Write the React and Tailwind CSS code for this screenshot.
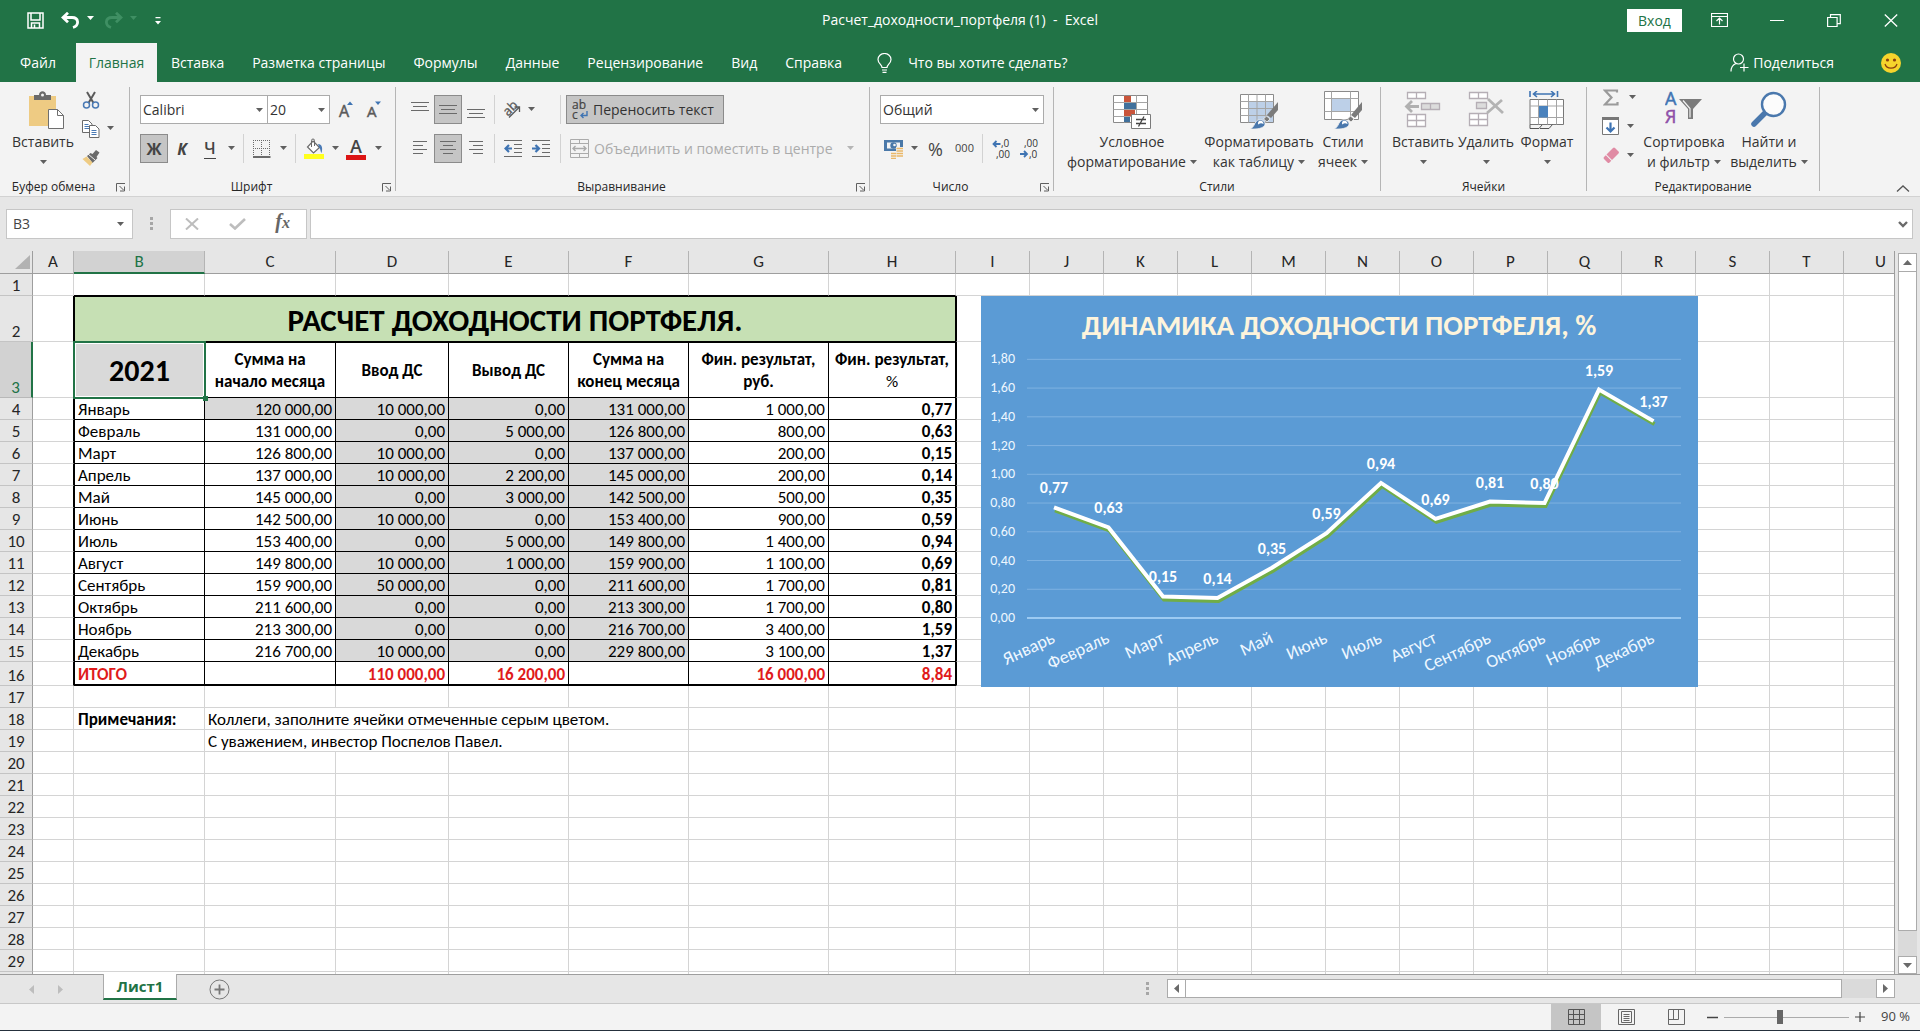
import React from "react";

const UI = "font-['Open_Sans','Noto_Sans',sans-serif]";
const SHEET = "font-['Carlito','Lato','Noto_Sans',sans-serif]";

/* ---------- small shared pieces ---------- */

function Caret({ className = "text-[#5f5f5f]" }) {
  return (
    <svg width="7" height="4" viewBox="0 0 7 4" className={"shrink-0 " + className} aria-hidden="true">
      <path d="M0 0h7L3.5 4z" fill="currentColor" />
    </svg>
  );
}

function Drop({ label, className = "w-3.5", tone }) {
  return (
    <button type="button" aria-label={label} className={"flex h-7 items-center justify-center " + className}>
      <Caret className={tone} />
    </button>
  );
}

function Tool({ label, className = "w-7", pressed = false, children }) {
  return (
    <button
      type="button"
      aria-label={label}
      aria-pressed={pressed}
      className={
        "flex h-[29px] shrink-0 items-center justify-center " +
        (pressed ? "border border-[#8b8b8b] bg-[#c5c5c5] " : "") +
        className
      }
    >
      {children}
    </button>
  );
}

function Divider({ className = "mx-1" }) {
  return <span className={"h-[29px] w-px shrink-0 bg-[#d2d2d2] " + className} />;
}

function Picker({ label, value, className }) {
  return (
    <div className={"relative flex h-[29px] items-center border border-[#ababab] bg-white " + className}>
      <select
        aria-label={label}
        className="h-full w-full appearance-none bg-transparent pl-0.5 text-sm text-[#333] outline-none"
        defaultValue={value}
      >
        <option>{value}</option>
      </select>
      <span className="pointer-events-none absolute right-1">
        <Caret />
      </span>
    </div>
  );
}

function Group({ title, launcher = false, className, children }) {
  return (
    <section aria-label={title} className={"flex shrink-0 " + className}>
      <div className="flex min-w-0 flex-1 flex-col">
        <div className="h-24">{children}</div>
        <div className="flex h-[18px] items-center">
          <h2 className="flex-1 text-center text-xs text-[#262626]">{title}</h2>
          {launcher && (
            <button type="button" aria-label={title + ": параметры"} className="flex h-4 w-[22px] items-center justify-end pr-[3px]">
              <svg width="10" height="9" viewBox="0 0 10 9" fill="none" stroke="#5f5f5f" aria-hidden="true">
                <path d="M.5 8.500V.5h8.500M3.500 3l4 4M8.500 3.500V8H4" />
              </svg>
            </button>
          )}
        </div>
      </div>
      <span className="mt-[5px] h-[104px] w-px bg-[#b5b5b5]" />
    </section>
  );
}

function TallButton({ icon, lines, className }) {
  const single = lines.length === 1;
  return (
    <button type="button" className={"flex shrink-0 flex-col items-center pt-[9px] text-sm leading-5 whitespace-nowrap text-[#333] " + className}>
      <span className="mb-px h-10">{icon}</span>
      <span>{lines[0]}</span>
      <span className="flex h-5 items-center gap-1">
        {!single && lines[1]}
        <Caret />
      </span>
    </button>
  );
}

/* ---------- ribbon drawings ---------- */

const PasteIcon = (
  <svg width="44" height="40" viewBox="0 0 44 40" aria-hidden="true">
    <rect x="8" y="5" width="27" height="30" fill="#eecb83" />
    <path d="M13 4h5c0-5 7-5 7 0h5v5H13z" fill="#6a6a6a" />
    <circle cx="21.500" cy="4" r="1.500" fill="#f3f3f3" />
    <path d="M27.500 18.500h9l6 6v13h-15z" fill="#fff" stroke="#6f6f6f" />
    <path d="M36.500 18.500v6h6" fill="none" stroke="#6f6f6f" />
  </svg>
);

const CutIcon = (
  <svg width="18" height="18" viewBox="0 0 18 18" fill="none" aria-hidden="true">
    <path d="M5 1l6.500 11M13 1L6.500 12" stroke="#5a5a5a" strokeWidth="2" />
    <circle cx="4.500" cy="14" r="3" stroke="#4a7ab5" strokeWidth="1.500" />
    <circle cx="13.500" cy="14" r="3" stroke="#4a7ab5" strokeWidth="1.500" />
  </svg>
);

const CopyIcon = (
  <svg width="18" height="18" viewBox="0 0 18 18" fill="#fff" stroke="#6a6a6a" aria-hidden="true">
    <path d="M.5.5h6l3.500 3.500v8.500H.5z" />
    <path d="M2.500 4.500h4M2.500 6.500h5M2.500 8.500h5" stroke="#4a7ab5" />
    <path d="M7.500 5.500h6l3.500 3.500v8.500H7.500z" />
    <path d="M9.500 10.500h5M9.500 12.500h5M9.500 14.500h5" stroke="#4a7ab5" />
  </svg>
);

const PainterIcon = (
  <svg width="19" height="16" viewBox="0 0 19 16" aria-hidden="true">
    <path d="M14 0l3.500 2.500-3 4.500 1 1-5 5L5 6l3.500-3 2 1z" fill="#6a6a6a" />
    <path d="M6 4l7 6" stroke="#f3f3f3" />
    <path d="M4.500 6.500l6 6-2.500 3.500L.5 9z" fill="#eecb83" />
  </svg>
);

function Lines({ rows, width = 18 }) {
  return (
    <svg width={width} height="17" viewBox={"0 0 " + width + " 17"} stroke="#6a6a6a" aria-hidden="true">
      {rows.map(([x, y, w]) => (
        <path key={y} d={"M" + x + " " + y + ".5h" + w} />
      ))}
    </svg>
  );
}

const BordersIcon = (
  <svg width="18" height="18" viewBox="0 0 18 18" fill="none" stroke="#6a6a6a" aria-hidden="true">
    <path d="M.5 0v17M16.500 0v17M8.500 0v17M0 .5h17M0 8.500h17" strokeDasharray="1 1" />
    <path d="M0 17h17.500" strokeWidth="2" />
  </svg>
);

const FillIcon = (
  <svg width="20" height="21" viewBox="0 0 20 21" aria-hidden="true">
    <path d="M9 3l6.500 6.500-6 5.500-6-6z" fill="#fff" stroke="#6a6a6a" strokeWidth="1.200" />
    <path d="M7.500 9V2.500a1.500 1.500 0 0 1 3 0V8" fill="none" stroke="#6a6a6a" />
    <path d="M14 6c4 0 5 4 3.500 9-1-1-1-4-2-5z" fill="#4a7ab5" />
    <rect x="0" y="16" width="20" height="5" fill="#ffff1e" />
  </svg>
);

const OrientIcon = (
  <svg width="22" height="20" viewBox="0 0 22 20" aria-hidden="true">
    <text x="3" y="15" fontSize="13" fill="#5a5a5a" stroke="#5a5a5a" strokeWidth=".3" transform="rotate(-45 7 11)">ab</text>
    <path d="M8 17.500L18 7.500M13.500 7h5v5" fill="none" stroke="#5a5a5a" strokeWidth="1.300" />
  </svg>
);

function IndentIcon({ flip = false }) {
  return (
    <svg width="19" height="17" viewBox="0 0 19 17" fill="none" aria-hidden="true">
      <path d="M0 .5h18M10 4.500h8M10 8.500h8M10 12.500h8M0 16.500h18" stroke="#6a6a6a" />
      <path d={flip ? "M0 8.500h7M3.500 5l3.500 3.500L3.500 12" : "M8 8.500H1.500M5 5L1.500 8.500 5 12"} stroke="#3f74b3" strokeWidth="2.200" />
    </svg>
  );
}

const WrapIcon = (
  <svg width="17" height="22" viewBox="0 0 17 22" aria-hidden="true">
    <text x="0" y="10" fontSize="12" fill="#444" stroke="#444" strokeWidth=".2">ab</text>
    <text x="0" y="20" fontSize="12" fill="#444" stroke="#444" strokeWidth=".2">c</text>
    <path d="M15 12v4.500H9M11.500 14L9 16.500l2.500 2.500" fill="none" stroke="#3f74b3" strokeWidth="1.400" />
  </svg>
);

const MergeIcon = (
  <svg width="19" height="19" viewBox="0 0 19 19" fill="none" stroke="#ababab" aria-hidden="true">
    <path d="M.5.5h18v18H.5zM.5 4.500h18M.5 14.500h18M9.500.5v4M9.500 14.500v4" />
    <path d="M3 9.500h13M5.500 7L3 9.500 5.500 12M13.500 7L16 9.500 13.500 12" strokeWidth="1.400" />
  </svg>
);

const MoneyIcon = (
  <svg width="20" height="20" viewBox="0 0 20 20" aria-hidden="true">
    <rect x="0" y="1" width="19" height="11" fill="#4a78a8" />
    <path d="M3 3.500h13v6H3z" fill="#f3f3f3" />
    <circle cx="9.500" cy="6.500" r="3.200" fill="#4a78a8" />
    <circle cx="10.500" cy="6" r="1.300" fill="#f3f3f3" />
    <path d="M12 8h7v11h-7z" fill="#f3f3f3" />
    <path d="M12.500 9.500H19M12.500 12H19M12.500 14.500H19M7 14.500h5M7 17h5M12.500 17H19M7 19.500h5" stroke="#eab868" strokeWidth="1.700" />
  </svg>
);

function DecimalIcon({ more = false }) {
  return (
    <svg width="19" height="22" viewBox="0 0 19 22" aria-hidden="true">
      <text x={more ? 9 : 4} y="9" fontSize="10" fill="#333">{more ? ",0" : ",00"}</text>
      <text x={more ? 4 : 9} y="20" fontSize="10" fill="#333">{more ? ",00" : ",0"}</text>
      <path
        d={more ? "M8.500 6H1.500M4.500 3l-3 3 3 3" : "M0 16h7M4 13l3 3-3 3"}
        fill="none"
        stroke="#3f74b3"
        strokeWidth="1.800"
      />
    </svg>
  );
}

const ConditionalIcon = (
  <svg width="38" height="40" viewBox="0 0 38 40" aria-hidden="true">
    <path d="M.5 4.500h34v27H.5z" fill="#fff" stroke="#8a8a8a" />
    <path d="M11.500 4.500v27M23.500 4.500v27M.5 11.500h34M.5 18.500h34M.5 25.500h34" stroke="#a5a5a5" fill="none" />
    <path d="M11 5h7v6h-7zM11 19h11v6H11z" fill="#c9553b" />
    <path d="M11 12h12v6H11zM11 26h6v5h-6z" fill="#41719c" />
    <path d="M18.500 23.500h19v14h-19z" fill="#fff" stroke="#7a7a7a" />
    <path d="M23 28.500h10M23 32.500h10M31 25.500l-5.500 10" stroke="#444" strokeWidth="1.300" />
  </svg>
);

const brush = (
  <g>
    <path d="M38 11v8l-7 8-4-3z" fill="#7b7b7b" />
    <path d="M26.500 25l3.500 3-3 3-3.500-3z" fill="#7b7b7b" stroke="#f3f3f3" strokeWidth=".8" />
    <path d="M10 38c4-1.500 4-5 6.500-8 3-2.500 7.500-1 8.500 2 .5 4-4 6.500-15 6z" fill="#4a78ad" stroke="#f3f3f3" strokeWidth=".8" />
    <path d="M19 30c3-1 4.500 1 4.500 3-2-1-3.500-1-5 .5-1-1-.5-2.500.5-3.500z" fill="#fff" />
  </g>
);

const FormatTableIcon = (
  <svg width="38" height="40" viewBox="0 0 38 40" aria-hidden="true">
    <path d="M.5 3.500h33v28H.5z" fill="#fff" stroke="#8a8a8a" />
    <path d="M9 11h24v20H9z" fill="#bdd0e8" />
    <path d="M8.500 3.500v28M17 3.500v28M25.500 3.500v28M.5 10.500h33M.5 17.500h33M.5 24.500h33" stroke="#a5a5a5" fill="none" />
    {brush}
  </svg>
);

const CellStylesIcon = (
  <svg width="39" height="40" viewBox="0 0 39 40" aria-hidden="true">
    <path d="M.5.5h34v28H.5z" fill="#fff" stroke="#8a8a8a" />
    <path d="M7.500.5v28M26.500.5v28M.5 7.500h34M.5 20.500h34" stroke="#a5a5a5" fill="none" />
    <path d="M8 8h18v12H8z" fill="#bdd0e8" />
    {brush}
  </svg>
);

const InsertCellsIcon = (
  <svg width="38" height="40" viewBox="0 0 38 40" fill="none" stroke="#b5aeb5" aria-hidden="true">
    <path d="M3.500 1.500h18v6h-18zM12.500 1.500v6M3.500 23.500h18v12h-18zM12.500 23.500v12M3.500 29.500h18" fill="#fff" strokeWidth="1.300" />
    <path d="M17.500 12.500h18v6h-18zM26.500 12.500v6" fill="#dcdcdc" strokeWidth="1.300" />
    <path d="M15 15.500H3M8 10l-5.500 5.500L8 21" stroke="#b0b0b0" strokeWidth="2.800" />
  </svg>
);

const DeleteCellsIcon = (
  <svg width="38" height="40" viewBox="0 0 38 40" fill="none" stroke="#b5aeb5" aria-hidden="true">
    <path d="M2.500 1.500h18v6h-18zM11.500 1.500v6M2.500 22.500h18v12h-18zM11.500 22.500v12M2.500 28.500h18" fill="#fff" strokeWidth="1.300" />
    <path d="M9.500 11.500h10v6h-10z" fill="#dcdcdc" strokeWidth="1.300" />
    <path d="M21 8l15 14M35 9L20 22" stroke="#b3b3b3" strokeWidth="2.800" />
  </svg>
);

const FormatCellsIcon = (
  <svg width="36" height="40" viewBox="0 0 36 40" fill="none" aria-hidden="true">
    <path d="M1 0v6M28.500 0v6M4 3h22M8 0L4.500 3 8 6M22 0l3.500 3L22 6" stroke="#3f74b3" strokeWidth="1.600" />
    <path d="M1 8.500h33.500v25H1z" fill="#fff" stroke="#777" />
    <path d="M9.500 8.500v25M18.500 8.500v25M27.500 8.500v25M1 15h33.500M1 26.500h33.500" stroke="#a5a5a5" />
    <path d="M10 15h9v11.500h-9z" fill="#4a82bd" />
    <path d="M1 33.500v4h9l3-3.500M11 37.500h9l3.500-4" stroke="#555" />
  </svg>
);

const SumIcon = (
  <svg width="16" height="17" viewBox="0 0 16 17" fill="none" aria-hidden="true">
    <path d="M14 3.500V1.500H2l6.500 7L2 15.500h12.500v-2.500" stroke="#9a9a9a" strokeWidth="2.200" />
  </svg>
);

const FillDownIcon = (
  <svg width="18" height="19" viewBox="0 0 18 19" fill="none" aria-hidden="true">
    <path d="M.5 1.500h16v16H.5z" fill="#fff" stroke="#777" />
    <path d="M0 1.500h17" stroke="#777" strokeWidth="3" />
    <path d="M8.500 5.500v9M4.500 10.500l4 4 4-4" stroke="#3f74b3" strokeWidth="2.200" />
  </svg>
);

const EraserIcon = (
  <svg width="18" height="17" viewBox="0 0 18 17" aria-hidden="true">
    <path d="M11 1q1-1 2 0l3.500 3.500q1 1 0 2L10 13 4.500 7.500z" fill="#e08ba4" />
    <path d="M3.800 8.200l5.500 5.500-1.800 1.800q-1 1-2 0l-3.500-3.500q-1-1 0-2z" fill="#e08ba4" />
  </svg>
);

const SortIcon = (
  <svg width="38" height="40" viewBox="0 0 38 40" aria-hidden="true">
    <text x="0" y="14" fontSize="18" fill="#3f74b3" stroke="#3f74b3" strokeWidth=".5">А</text>
    <text x="0" y="32" fontSize="18" fill="#8e4fa8" stroke="#8e4fa8" strokeWidth=".5">Я</text>
    <path d="M14 8h23L28 18v10h-5V18z" fill="#7b7b7b" />
    <path d="M18 9.500l7 8v9" fill="none" stroke="#f3f3f3" strokeWidth="1.200" />
  </svg>
);

const FindIcon = (
  <svg width="38" height="40" viewBox="0 0 38 40" fill="none" aria-hidden="true">
    <path d="M4 33l11-11" stroke="#4a78ad" strokeWidth="5.500" strokeLinecap="round" />
    <circle cx="23.500" cy="13.500" r="11.500" fill="#fcfcfc" stroke="#4a78ad" strokeWidth="2.400" />
  </svg>
);

/* ---------- title bar and tabs ---------- */

function TitleBar() {
  return (
    <header className="grid h-[43px] shrink-0 grid-cols-[1fr_auto_1fr] items-start bg-[#217346] text-sm text-white">
      <div className="flex h-10 items-center pl-[27px]">
        <button type="button" aria-label="Сохранить">
          <svg width="17" height="17" viewBox="0 0 17 17" fill="none" stroke="#fff" aria-hidden="true">
            <path d="M1 1h15v15H1zM4 1v7h9V1" strokeWidth="1.500" />
            <path d="M4.500 16v-5h8v5M7.500 12.500V16" strokeWidth="1.500" />
          </svg>
        </button>
        <button type="button" aria-label="Отменить" className="ml-[17px]">
          <svg width="19" height="17" viewBox="0 0 19 17" fill="none" stroke="#fff" strokeWidth="2.800" aria-hidden="true">
            <path d="M7 .8L2 5.500l5 4.700M2 5.500h9c7 0 7.500 8 1 10" />
          </svg>
        </button>
        <Drop label="Список отмен" tone="text-white" className="ml-0.5 w-4 pb-1" />
        <button type="button" aria-label="Повторить" className="ml-1.5" disabled>
          <svg width="19" height="17" viewBox="0 0 19 17" fill="none" stroke="#3f8f63" strokeWidth="2.800" aria-hidden="true">
            <path d="M12 .8l5 4.700-5 4.700M17 5.500H8c-7 0-7.500 8-1 10" />
          </svg>
        </button>
        <Drop label="Список повторов" tone="text-[#3f8f63]" className="ml-0.5 w-4 pb-1" />
        <button type="button" aria-label="Настройка панели быстрого доступа" className="mt-0.5 ml-3.5">
          <svg width="6" height="8" viewBox="0 0 6 8" aria-hidden="true">
            <path d="M.5 0h5v1.300h-5zM0 4h6L3 7.500z" fill="#fff" />
          </svg>
        </button>
      </div>
      <h1 className="h-10 leading-10 whitespace-pre">Расчет_доходности_портфеля (1)  -  Excel</h1>
      <div className="flex h-10 items-center justify-end pr-[22px]">
        <button type="button" className="h-[23px] w-[55px] bg-white leading-[23px] text-[#217346]">Вход</button>
        <button type="button" aria-label="Параметры отображения ленты" className="ml-[29px]">
          <svg width="17" height="14" viewBox="0 0 17 14" fill="none" stroke="#fff" aria-hidden="true">
            <path d="M.5.5h16v13H.5zM.5 3.500h16M8.500 11.500v-6M5.500 8l3-3 3 3" strokeWidth="1.200" />
          </svg>
        </button>
        <button type="button" aria-label="Свернуть" className="ml-[42px]">
          <svg width="14" height="14" viewBox="0 0 14 14" stroke="#fff" aria-hidden="true">
            <path d="M0 7.500h14" />
          </svg>
        </button>
        <button type="button" aria-label="Восстановить" className="ml-[43px]">
          <svg width="14" height="13" viewBox="0 0 14 13" fill="none" stroke="#fff" strokeWidth="1.200" aria-hidden="true">
            <path d="M.6 3.500h9.500v9H.6zM3.500 3V.6h9.800v9h-3" />
          </svg>
        </button>
        <button type="button" aria-label="Закрыть" className="ml-[43px]">
          <svg width="14" height="13" viewBox="0 0 14 13" stroke="#fff" strokeWidth="1.300" aria-hidden="true">
            <path d="M.8.5l12.400 12M13.200.5L.8 12.500" />
          </svg>
        </button>
      </div>
    </header>
  );
}

const TABS = ["Вставка", "Разметка страницы", "Формулы", "Данные", "Рецензирование", "Вид", "Справка"];

function TabBar() {
  return (
    <nav aria-label="Вкладки ленты" className="flex h-[39px] shrink-0 items-stretch bg-[#217346] text-sm whitespace-nowrap text-white">
      <button type="button" className="w-[76px]">Файл</button>
      <button type="button" className="w-[81px] bg-[#f3f3f3] text-[#217346]">Главная</button>
      {TABS.map((t) => (
        <button key={t} type="button" className="px-3.5">{t}</button>
      ))}
      <button type="button" className="ml-[21px] flex items-center gap-4">
        <svg width="15" height="20" viewBox="0 0 15 20" fill="none" stroke="#fff" strokeWidth="1.200" aria-hidden="true">
          <path d="M5 14.500c0-3-4-4-4-8a6.500 6 0 0 1 13 0c0 4-4 5-4 8zM5 17h5M5.500 19.300h4" />
        </svg>
        Что вы хотите сделать?
      </button>
      <button type="button" className="ml-auto flex items-center gap-1">
        <svg width="19" height="19" viewBox="0 0 19 19" fill="none" stroke="#fff" strokeWidth="1.200" aria-hidden="true">
          <circle cx="8.500" cy="6" r="5" />
          <path d="M1 18.500c0-4.500 2.500-7 5-8M14 10.500v8M10 14.500h8.500" />
        </svg>
        Поделиться
      </button>
      <button type="button" aria-label="Отправить отзыв" className="mr-[19px] ml-[47px]">
        <svg width="20" height="20" viewBox="0 0 20 20" aria-hidden="true">
          <circle cx="10" cy="10" r="10" fill="#f6d42c" />
          <circle cx="6.500" cy="7" r="1.600" fill="#8a3f10" />
          <circle cx="13.500" cy="7" r="1.600" fill="#8a3f10" />
          <path d="M4 11c1.500 5.500 10.500 5.500 12 0" fill="none" stroke="#8a3f10" strokeWidth="1.200" />
        </svg>
      </button>
    </nav>
  );
}

/* ---------- ribbon ---------- */

function FontSizeButton({ label, up }) {
  return (
    <Tool label={label}>
      <svg width="16" height="18" viewBox="0 0 16 18" aria-hidden="true">
        <text x="1" y="16" fontSize={up ? 16 : 15} fill="#5a5a5a" stroke="#5a5a5a" strokeWidth=".5">A</text>
        <path d={up ? "M9 4h6l-3-3.500z" : "M9 .5h6l-3 3.500z"} fill="#3f74b3" />
      </svg>
    </Tool>
  );
}

function Ribbon() {
  return (
    <div className="flex h-[115px] shrink-0 overflow-hidden border-b border-[#d2d2d2] bg-[#f3f3f3]">
      <Group title="Буфер обмена" launcher className="w-[130px]">
        <div className="flex">
          <TallButton icon={PasteIcon} lines={["Вставить"]} className="ml-[5px] w-[76px]" />
          <div className="flex flex-col pt-[3px]">
            <Tool label="Вырезать" className="w-5">{CutIcon}</Tool>
            <div className="flex">
              <Tool label="Копировать" className="w-5">{CopyIcon}</Tool>
              <Drop label="Варианты копирования" className="ml-0.5 w-3.5" />
            </div>
            <Tool label="Формат по образцу" className="w-5">{PainterIcon}</Tool>
          </div>
        </div>
      </Group>

      <Group title="Шрифт" launcher className="w-[266px]">
        <div className="flex flex-col gap-2.5 pt-[13px] pl-2.5">
          <div className="flex">
            <Picker label="Шрифт" value="Calibri" className="w-32" />
            <Picker label="Размер шрифта" value="20" className="-ml-px w-[63px]" />
            <span className="ml-0.5 flex">
              <FontSizeButton label="Увеличить размер шрифта" up />
              <FontSizeButton label="Уменьшить размер шрифта" />
            </span>
          </div>
          <div className="flex text-base text-[#444]">
            <Tool label="Полужирный" pressed><b>Ж</b></Tool>
            <Tool label="Курсив"><b className="italic">К</b></Tool>
            <Tool label="Подчеркнутый"><span className="border-b border-[#444] leading-5 font-semibold">Ч</span></Tool>
            <Drop label="Виды подчеркивания" />
            <Divider className="mx-[5px]" />
            <Tool label="Границы" className="w-[26px]">{BordersIcon}</Tool>
            <Drop label="Виды границ" className="w-4" />
            <Divider />
            <Tool label="Цвет заливки">{FillIcon}</Tool>
            <Drop label="Выбор цвета заливки" />
            <Tool label="Цвет шрифта">
              <span className="flex w-5 flex-col items-center border-b-[5px] border-[#dc1414] text-lg leading-[17px] font-semibold">A</span>
            </Tool>
            <Drop label="Выбор цвета шрифта" className="w-4" />
          </div>
        </div>
      </Group>

      <Group title="Выравнивание" launcher className="w-[474px]">
        <div className="flex flex-col gap-2.5 pt-[13px] pl-2.5">
          <div className="flex">
            <Tool label="По верхнему краю"><Lines rows={[[0, 1, 18], [2, 5, 14], [0, 9, 18]]} /></Tool>
            <Tool label="По середине" pressed><Lines rows={[[0, 4, 18], [2, 8, 14], [0, 12, 18]]} /></Tool>
            <Tool label="По нижнему краю"><Lines rows={[[0, 8, 18], [2, 12, 14], [0, 16, 18]]} /></Tool>
            <Divider />
            <Tool label="Ориентация" className="w-[26px]">{OrientIcon}</Tool>
            <Drop label="Варианты ориентации" className="mr-[18px] w-3" />
            <Divider className="mr-[5px] ml-[5px]" />
            <button type="button" aria-pressed="true" className="flex h-[29px] items-center gap-1 border border-[#8b8b8b] bg-[#c5c5c5] px-[5px] text-sm whitespace-nowrap text-[#333]">
              {WrapIcon}
              <span className="pr-1">Переносить текст</span>
            </button>
          </div>
          <div className="flex">
            <Tool label="По левому краю"><Lines width={14} rows={[[0, 1, 14], [0, 5, 10], [0, 9, 14], [0, 13, 10]]} /></Tool>
            <Tool label="По центру" pressed><Lines width={16} rows={[[0, 1, 16], [3, 5, 10], [0, 9, 16], [3, 13, 10]]} /></Tool>
            <Tool label="По правому краю"><Lines width={14} rows={[[0, 1, 14], [4, 5, 10], [0, 9, 14], [4, 13, 10]]} /></Tool>
            <Divider />
            <Tool label="Уменьшить отступ"><IndentIcon /></Tool>
            <Tool label="Увеличить отступ"><IndentIcon flip /></Tool>
            <Divider className="mr-[9px] ml-[5px]" />
            <button type="button" disabled className="flex h-[29px] items-center gap-[5px] text-sm whitespace-nowrap text-[#ababab]">
              {MergeIcon}
              Объединить и поместить в центре
            </button>
            <Drop label="Варианты объединения" tone="text-[#b5b5b5]" className="ml-3 w-3" />
          </div>
        </div>
      </Group>

      <Group title="Число" launcher className="w-[184px]">
        <div className="flex flex-col gap-2.5 pt-[13px] pl-2.5">
          <Picker label="Числовой формат" value="Общий" className="w-[164px]" />
          <div className="flex text-[#444]">
            <Tool label="Финансовый числовой формат">{MoneyIcon}</Tool>
            <Drop label="Выбор валюты" className="w-3" />
            <Tool label="Процентный формат" className="w-[31px]"><span className="text-lg">%</span></Tool>
            <Tool label="Формат с разделителями" className="w-[27px]"><span className="text-[11px]">000</span></Tool>
            <Divider />
            <Tool label="Увеличить разрядность"><DecimalIcon more /></Tool>
            <Tool label="Уменьшить разрядность"><DecimalIcon /></Tool>
          </div>
        </div>
      </Group>

      <Group title="Стили" className="w-[327px]">
        <div className="flex">
          <TallButton icon={ConditionalIcon} lines={["Условное", "форматирование"]} className="ml-[11px] w-[134px]" />
          <TallButton icon={FormatTableIcon} lines={["Форматировать", "как таблицу"]} className="ml-1 w-28" />
          <TallButton icon={CellStylesIcon} lines={["Стили", "ячеек"]} className="ml-0.5 w-[52px]" />
        </div>
      </Group>

      <Group title="Ячейки" className="w-[206px]">
        <div className="flex pl-2.5">
          <TallButton icon={InsertCellsIcon} lines={["Вставить"]} className="w-16" />
          <TallButton icon={DeleteCellsIcon} lines={["Удалить"]} className="w-[62px]" />
          <TallButton icon={FormatCellsIcon} lines={["Формат"]} className="w-[60px]" />
        </div>
      </Group>

      <Group title="Редактирование" className="w-[233px]">
        <div className="flex pl-3.5">
          <div className="flex flex-col pt-px">
            <div className="flex">
              <Tool label="Автосумма" className="w-5">{SumIcon}</Tool>
              <Drop label="Другие функции" className="ml-1 w-3.5" />
            </div>
            <div className="flex">
              <Tool label="Заполнить" className="w-5">{FillDownIcon}</Tool>
              <Drop label="Варианты заполнения" className="ml-0.5 w-3.5" />
            </div>
            <div className="flex">
              <Tool label="Очистить" className="w-5">{EraserIcon}</Tool>
              <Drop label="Варианты очистки" className="ml-0.5 w-3.5" />
            </div>
          </div>
          <TallButton icon={SortIcon} lines={["Сортировка", "и фильтр"]} className="ml-0.5 w-[86px]" />
          <TallButton icon={FindIcon} lines={["Найти и", "выделить"]} className="ml-1 w-[76px]" />
        </div>
      </Group>

      <div className="flex flex-1 items-end justify-end pr-2.5 pb-1">
        <button type="button" aria-label="Свернуть ленту">
          <svg width="14" height="7" viewBox="0 0 14 7" fill="none" stroke="#555" strokeWidth="1.300" aria-hidden="true">
            <path d="M1 6.500l6-5.500 6 5.500" />
          </svg>
        </button>
      </div>
    </div>
  );
}

/* ---------- formula bar ---------- */

function FormulaBar() {
  return (
    <div className="flex h-[54px] shrink-0 items-start bg-[#e6e6e6] pt-3 pr-[7px] pl-1.5 text-sm text-[#444]">
      <div className="flex h-[30px] w-[127px] shrink-0 items-center border border-[#c6c6c6] bg-white">
        <input aria-label="Имя ячейки" defaultValue="B3" className="min-w-0 flex-1 bg-transparent pl-1.5 outline-none" />
        <Drop label="Список имен" className="w-6" />
      </div>
      <svg width="3" height="13" viewBox="0 0 3 13" className="mx-[17px] mt-2 shrink-0" fill="#a6a6a6" aria-hidden="true">
        <path d="M0 0h3v3H0zM0 5h3v3H0zM0 10h3v3H0z" />
      </svg>
      <div className="flex h-[30px] w-[137px] shrink-0 items-center justify-between border border-[#c6c6c6] bg-white pr-4 pl-3.5">
        <button type="button" aria-label="Отмена" disabled>
          <svg width="14" height="12" viewBox="0 0 14 12" stroke="#bdbdbd" strokeWidth="2" aria-hidden="true">
            <path d="M1 .5l12 11M13 .5L1 11.500" />
          </svg>
        </button>
        <button type="button" aria-label="Ввод" disabled>
          <svg width="17" height="12" viewBox="0 0 17 12" fill="none" stroke="#bdbdbd" strokeWidth="2.600" aria-hidden="true">
            <path d="M1 6l5 4.500L16 1" />
          </svg>
        </button>
        <button type="button" aria-label="Вставить функцию" className="pb-1 font-['Liberation_Serif',serif] text-xl leading-6 font-bold text-[#666] italic">
          f<span className="text-base">x</span>
        </button>
      </div>
      <div className="ml-[3px] flex h-[30px] flex-1 items-center border border-[#c6c6c6] bg-white">
        <input aria-label="Строка формул" className="min-w-0 flex-1 bg-transparent px-2 outline-none" />
        <button type="button" aria-label="Развернуть строку формул" className="w-3.5">
          <svg width="10" height="7" viewBox="0 0 10 7" fill="none" stroke="#6a6a6a" strokeWidth="2.400" aria-hidden="true">
            <path d="M1 1l4 4 4-4" />
          </svg>
        </button>
      </div>
    </div>
  );
}

/* ---------- worksheet ---------- */

const COLUMNS = ["A", "B", "C", "D", "E", "F", "G", "H", "I", "J", "K", "L", "M", "N", "O", "P", "Q", "R", "S", "T", "U"];
const TAIL = COLUMNS.slice(8);

const MONTHS = [
  ["Январь", "120 000,00", "10 000,00", "0,00", "131 000,00", "1 000,00", "0,77"],
  ["Февраль", "131 000,00", "0,00", "5 000,00", "126 800,00", "800,00", "0,63"],
  ["Март", "126 800,00", "10 000,00", "0,00", "137 000,00", "200,00", "0,15"],
  ["Апрель", "137 000,00", "10 000,00", "2 200,00", "145 000,00", "200,00", "0,14"],
  ["Май", "145 000,00", "0,00", "3 000,00", "142 500,00", "500,00", "0,35"],
  ["Июнь", "142 500,00", "10 000,00", "0,00", "153 400,00", "900,00", "0,59"],
  ["Июль", "153 400,00", "0,00", "5 000,00", "149 800,00", "1 400,00", "0,94"],
  ["Август", "149 800,00", "10 000,00", "1 000,00", "159 900,00", "1 100,00", "0,69"],
  ["Сентябрь", "159 900,00", "50 000,00", "0,00", "211 600,00", "1 700,00", "0,81"],
  ["Октябрь", "211 600,00", "0,00", "0,00", "213 300,00", "1 700,00", "0,80"],
  ["Ноябрь", "213 300,00", "0,00", "0,00", "216 700,00", "3 400,00", "1,59"],
  ["Декабрь", "216 700,00", "10 000,00", "0,00", "229 800,00", "3 100,00", "1,37"],
];
const TOTALS = ["ИТОГО", "", "110 000,00", "16 200,00", "", "16 000,00", "8,84"];
const HEADINGS = [
  ["Сумма на", "начало месяца"],
  ["Ввод ДС"],
  ["Вывод ДС"],
  ["Сумма на", "конец месяца"],
  ["Фин. результат,", "руб."],
  ["Фин. результат,", "%"],
];

const GRID = "border-r border-b border-[#d4d4d4]";

function RowHead({ n, className = "h-[22px]", selected = false }) {
  return (
    <th
      scope="row"
      className={
        "border-b p-0 text-center align-bottom font-normal " +
        (selected
          ? "border-r-2 border-r-[#217346] border-b-[#b8b8b8] bg-[#d2d2d2] text-[#217346] "
          : "border-r border-r-[#9e9e9e] border-b-[#c4c4c4] bg-[#e6e6e6] text-[#262626] ") +
        className
      }
    >
      {n}
    </th>
  );
}

function Blank({ count, className = GRID }) {
  return Array.from({ length: count }, (_, i) => <td key={i} className={className} />);
}

/* empty column A cell beside the bordered table */
const Gutter = () => <td className="border-r border-b border-r-black border-b-[#d4d4d4]" />;

/* empty cells to the right of the bordered table */
const Tail = () => (
  <>
    <td className="border-r border-b border-l border-[#d4d4d4] border-l-black" />
    <Blank count={TAIL.length - 1} />
  </>
);

function Sheet() {
  return (
    <table className={"w-[1911px] table-fixed border-separate border-spacing-0 text-[17px] leading-[18px] text-black " + SHEET}>
      <colgroup>
        <col className="w-[33px]" />
        <col className="w-[41px]" />
        <col className="w-[131px]" />
        <col className="w-[131px]" />
        <col className="w-[113px]" />
        <col className="w-[120px]" />
        <col className="w-[120px]" />
        <col className="w-[140px]" />
        <col className="w-[127px]" />
        {TAIL.map((c) => (
          <col key={c} className="w-[74px]" />
        ))}
      </colgroup>
      <thead>
        <tr>
          <th aria-label="Выделить все" className="h-[23px] border-r border-b border-[#9e9e9e] bg-[#e6e6e6] p-0">
            <svg width="15" height="14" viewBox="0 0 15 14" className="ml-auto mr-0.5" aria-hidden="true">
              <path d="M15 0v14H0z" fill="#b2b2b2" />
            </svg>
          </th>
          {COLUMNS.map((c) => (
            <th
              key={c}
              scope="col"
              className={
                "border-r border-r-[#b4b4b4] p-0 text-center font-normal " +
                (c === "B" ? "border-b-2 border-b-[#217346] bg-[#d2d2d2] text-[#217346]" : "border-b border-b-[#9e9e9e] bg-[#e6e6e6] text-[#262626]")
              }
            >
              {c}
            </th>
          ))}
        </tr>
      </thead>
      <tbody>
        <tr>
          <RowHead n={1} />
          <Blank count={1} />
          <Blank count={7} className="border-r border-b border-r-[#d4d4d4] border-b-black" />
          <Blank count={TAIL.length} />
        </tr>
        <tr>
          <RowHead n={2} className="h-[46px]" />
          <Gutter />
          <th colSpan={7} className="border border-black bg-[#c6e0b4] px-0 pt-0.5 pb-0 text-center align-middle text-[31px] leading-10 font-bold">
            РАСЧЕТ ДОХОДНОСТИ ПОРТФЕЛЯ.
          </th>
          <Tail />
        </tr>
        <tr>
          <RowHead n={3} className="h-14" selected />
          <Gutter />
          <td className="relative border border-black bg-[#d9d9d9] px-0 pt-0.5 pb-0 text-center align-middle text-[30px] leading-10 font-bold">
            2021
            <span className="absolute -inset-0.5 border-2 border-[#217346]">
              <span className="block h-full border border-white" />
            </span>
            <span className="absolute -right-1 -bottom-1 h-[5px] w-[5px] bg-[#217346]" />
          </td>
          {HEADINGS.map((lines, i) => (
            <th key={i} scope="col" className="border-t border-r border-b border-black px-0 pt-0.5 pb-0 text-center align-middle leading-[22px] font-bold">
              {lines.map((l) => (
                <span key={l} className={"block " + (l === "%" ? "font-normal" : "")}>{l}</span>
              ))}
            </th>
          ))}
          <Tail />
        </tr>
        {MONTHS.map((cells, r) => (
          <tr key={cells[0]}>
            <RowHead n={r + 4} />
            <Gutter />
            {cells.map((v, c) => {
              const input = (c === 1 && r === 0) || (c >= 2 && c <= 4);
              return (
                <td
                  key={c}
                  className={
                    "border-r border-b border-black py-0 align-bottom " +
                    (c === 0 ? "border-l pl-[3px] text-left " : "pr-[3px] text-right ") +
                    (input ? "bg-[#d9d9d9] " : "") +
                    (c === 6 ? "font-bold" : "")
                  }
                >
                  {v}
                </td>
              );
            })}
            <Tail />
          </tr>
        ))}
        <tr className="font-bold text-[#e01b1b]">
          <RowHead n={16} className="h-6" />
          <Gutter />
          {TOTALS.map((v, c) => (
            <td
              key={c}
              className={
                "border-r border-b-2 border-black py-0 align-bottom " +
                (c === 0 ? "border-l pl-[3px] text-left" : "pr-[3px] text-right")
              }
            >
              {v}
            </td>
          ))}
          <Tail />
        </tr>
        <tr>
          <RowHead n={17} />
          <Blank count={21} />
        </tr>
        <tr>
          <RowHead n={18} />
          <Blank count={1} />
          <td className={"py-0 pl-1 align-bottom font-bold " + GRID}>Примечания:</td>
          <td colSpan={4} className={"py-0 pl-[3px] align-bottom whitespace-nowrap " + GRID}>Коллеги, заполните ячейки отмеченные серым цветом.</td>
          <Blank count={15} />
        </tr>
        <tr>
          <RowHead n={19} />
          <Blank count={2} />
          <td colSpan={3} className={"py-0 pl-[3px] align-bottom whitespace-nowrap " + GRID}>С уважением, инвестор Поспелов Павел.</td>
          <Blank count={16} />
        </tr>
        {Array.from({ length: 11 }, (_, i) => (
          <tr key={i}>
            <RowHead n={i < 10 ? i + 20 : ""} />
            <Blank count={21} />
          </tr>
        ))}
      </tbody>
    </table>
  );
}

/* ---------- chart ---------- */

const SERIES = MONTHS.map((m) => [m[0], m[6], parseFloat(m[6].replace(",", "."))]);
const AXIS = ["0,00", "0,20", "0,40", "0,60", "0,80", "1,00", "1,20", "1,40", "1,60", "1,80"];
const px = (i) => 73 + 54.5 * i;
const py = (v) => 322 - 143.7 * v;

function Chart() {
  const line = SERIES.map(([, , v], i) => px(i) + "," + py(v)).join(" ");
  return (
    <svg viewBox="0 0 717 391" width="717" height="391" role="img" aria-label="Динамика доходности портфеля, %" className={"absolute top-[45px] left-[981px] " + SHEET}>
      <rect width="717" height="391" fill="#5b9bd5" />
      <text x="358" y="39" textAnchor="middle" fontSize="29" fontWeight="bold" fill="#fdf4dc">ДИНАМИКА ДОХОДНОСТИ ПОРТФЕЛЯ, %</text>
      {AXIS.map((t, i) => (
        <g key={t}>
          <path d={"M46 " + py(i * 0.2) + "H700"} stroke={i ? "#7fb2e2" : "#9ccaf2"} strokeWidth={i ? 1 : 2} />
          <text x="34" y={py(i * 0.2) + 4} textAnchor="end" fontSize="14" fill="#eef7ff">{t}</text>
        </g>
      ))}
      <polyline points={line} fill="none" stroke="#70ad47" strokeWidth="4" transform="translate(1 3)" />
      <polyline points={line} fill="none" stroke="#fff" strokeWidth="4" />
      {SERIES.map(([name, label, v], i) => (
        <g key={name} fill="#fff">
          <text x={px(i)} y={py(v) - 14} textAnchor="middle" fontSize="16" fontWeight="bold">{label}</text>
          <text textAnchor="end" fontSize="18" fill="#eef7ff" transform={"translate(" + (px(i) + 2) + " 346) rotate(-25)"}>{name}</text>
        </g>
      ))}
    </svg>
  );
}

/* ---------- scroll bars, sheet tabs, status bar ---------- */

function Arrow({ d, className = "text-[#6a6a6a]" }) {
  return (
    <svg width="9" height="9" viewBox="0 0 9 9" className={className} aria-hidden="true">
      <path d={d} fill="currentColor" />
    </svg>
  );
}

const BOX = "flex shrink-0 items-center justify-center border border-[#ababab] bg-white ";

function VerticalScroll() {
  return (
    <div className="flex w-[25px] shrink-0 flex-col bg-[#e6e6e6] px-[3px]">
      <button type="button" aria-label="Прокрутить вверх" className={BOX + "mt-0.5 h-[19px]"}>
        <Arrow d="M0 7h9L4.500 2z" />
      </button>
      <div className="flex flex-1 flex-col bg-[#dadada] pb-[25px]">
        <div className="flex-1 border border-t-0 border-[#ababab] bg-white" />
      </div>
      <button type="button" aria-label="Прокрутить вниз" className={BOX + "h-[18px]"}>
        <Arrow d="M0 2h9L4.500 7z" />
      </button>
    </div>
  );
}

function SheetTabs() {
  return (
    <div className="flex h-[29px] shrink-0 items-start border-t border-[#9e9e9e] bg-[#e6e6e6]">
      <button type="button" aria-label="Предыдущий лист" className="mt-2.5 ml-[27px]"><Arrow d="M7 0v9L2 4.500z" className="text-[#bdbdbd]" /></button>
      <button type="button" aria-label="Следующий лист" className="mt-2.5 ml-5"><Arrow d="M2 0v9l5-4.500z" className="text-[#bdbdbd]" /></button>
      <button type="button" className="-mt-px ml-[38px] h-[26px] w-[74px] border-x border-b-2 border-x-[#ababab] border-b-[#217346] bg-white text-[15px] leading-6 font-bold text-[#217346]">
        Лист1
      </button>
      <button type="button" aria-label="Новый лист" className="mt-1 ml-8">
        <svg width="21" height="21" viewBox="0 0 21 21" fill="none" stroke="#777" aria-hidden="true">
          <circle cx="10.500" cy="10.500" r="9.500" />
          <path d="M10.500 5.500v10M5.500 10.500h10" strokeWidth="1.800" />
        </svg>
      </button>
      <div className="mt-1 mr-[25px] ml-auto flex h-[19px] w-[39%] items-center">
        <svg width="3" height="13" viewBox="0 0 3 13" className="mr-[18px] shrink-0" fill="#a6a6a6" aria-hidden="true">
          <path d="M0 0h3v3H0zM0 5h3v3H0zM0 10h3v3H0z" />
        </svg>
        <button type="button" aria-label="Прокрутить влево" className={BOX + "h-full w-[19px]"}><Arrow d="M7 0v9L2 4.500z" /></button>
        <div className="flex h-full flex-1 bg-[#dadada] pr-[34px]">
          <div className="flex-1 border border-l-0 border-[#ababab] bg-white" />
        </div>
        <button type="button" aria-label="Прокрутить вправо" className={BOX + "h-full w-[19px]"}><Arrow d="M2 0v9l5-4.500z" /></button>
      </div>
    </div>
  );
}

function StatusBar() {
  return (
    <footer className="flex h-7 shrink-0 items-stretch justify-end border-t border-b border-t-[#c8c8c8] border-b-[#25303c] bg-[#f3f3f3] text-[#444]">
      <button type="button" aria-label="Обычный" aria-pressed="true" className="flex w-[50px] items-center justify-center bg-[#c5c5c5]">
        <svg width="17" height="16" viewBox="0 0 17 16" fill="none" stroke="#555" aria-hidden="true">
          <path d="M.5.5h16v15H.5zM5.500.5v15M11.500.5v15M.5 5.500h16M.5 10.500h16" />
        </svg>
      </button>
      <button type="button" aria-label="Разметка страницы" className="flex w-[50px] items-center justify-center">
        <svg width="17" height="16" viewBox="0 0 17 16" fill="none" stroke="#666" aria-hidden="true">
          <path d="M.5.5h16v15H.5zM3.500 2.500h10v11h-10zM5.500 5.500h6M5.500 7.500h6M5.500 9.500h6M5.500 11.500h6" />
        </svg>
      </button>
      <button type="button" aria-label="Страничный режим" className="flex w-[50px] items-center justify-center">
        <svg width="17" height="16" viewBox="0 0 17 16" fill="none" stroke="#666" aria-hidden="true">
          <path d="M.5.5h16v15H.5zM5.500.5v10M10.500.5v10h-10" />
        </svg>
      </button>
      <button type="button" aria-label="Уменьшить" className="ml-1.5">
        <svg width="11" height="11" viewBox="0 0 11 11" stroke="#444" aria-hidden="true"><path d="M0 5.500h11" strokeWidth="1.500" /></svg>
      </button>
      <input
        type="range"
        aria-label="Масштаб"
        min="10"
        max="190"
        defaultValue="90"
        className="mx-1.5 w-[125px] appearance-none bg-transparent bg-[linear-gradient(#ababab,#ababab)] bg-[length:100%_1px] bg-center bg-no-repeat [&::-webkit-slider-thumb]:h-3.5 [&::-webkit-slider-thumb]:w-1.5 [&::-webkit-slider-thumb]:appearance-none [&::-webkit-slider-thumb]:bg-[#666]"
      />
      <button type="button" aria-label="Увеличить">
        <svg width="10" height="10" viewBox="0 0 10 10" stroke="#444" aria-hidden="true"><path d="M0 5h10M5 0v10" strokeWidth="1.200" /></svg>
      </button>
      <span className="mr-2.5 ml-4 self-center text-[13px]">90 %</span>
    </footer>
  );
}

export default function App() {
  return (
    <div className={"flex h-screen flex-col overflow-hidden bg-white " + UI}>
      <TitleBar />
      <TabBar />
      <Ribbon />
      <FormulaBar />
      <main className="flex min-h-0 flex-1">
        <div className="relative min-w-0 flex-1 overflow-hidden border-r border-[#9e9e9e]">
          <Sheet />
          <Chart />
        </div>
        <VerticalScroll />
      </main>
      <SheetTabs />
      <StatusBar />
    </div>
  );
}
